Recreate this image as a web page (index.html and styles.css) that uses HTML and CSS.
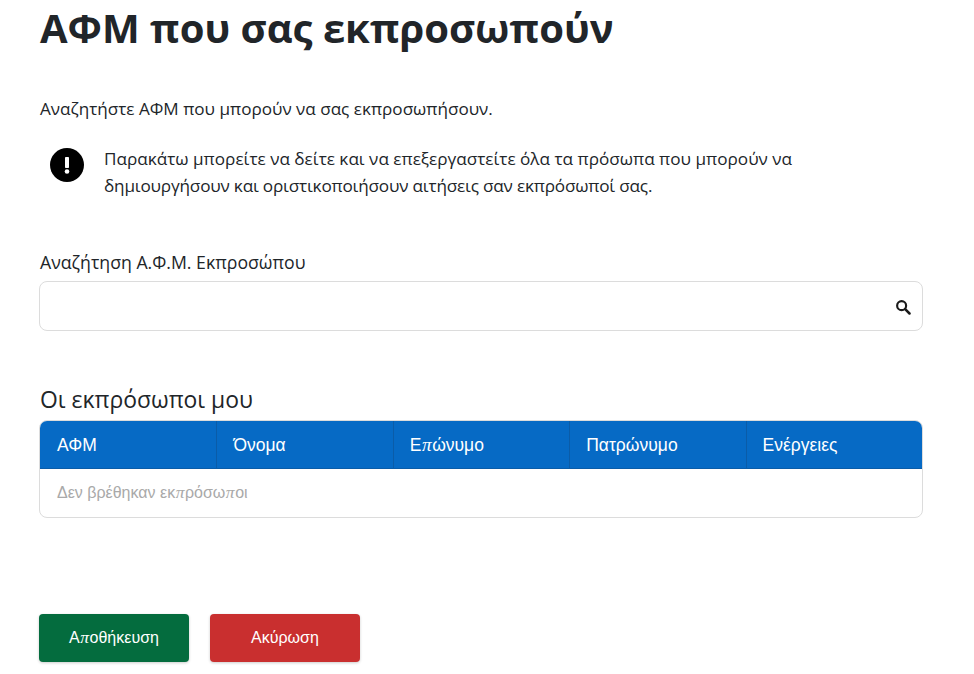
FILE: index.html
```html
<!DOCTYPE html>
<html lang="el">
<head>
<meta charset="utf-8">
<title>ΑΦΜ που σας εκπροσωπούν</title>
<link rel="stylesheet" href="styles.css">
</head>
<body>
<main class="page">
  <h1 class="title">ΑΦΜ που σας εκπροσωπούν</h1>
  <p class="lead">Αναζητήστε ΑΦΜ που μπορούν να σας εκπροσωπήσουν.</p>
  <div class="notice">
    <svg class="notice-icon" viewBox="0 0 34 34" aria-hidden="true">
      <circle cx="17" cy="17" r="17" fill="#000"/>
      <rect x="15" y="9" width="4" height="11" rx="0.8" fill="#fff"/>
      <circle cx="17" cy="23.5" r="2.3" fill="#fff"/>
    </svg>
    <p class="notice-text"><span class="line">Παρακάτω μπορείτε να δείτε και να επεξεργαστείτε όλα τα πρόσωπα που μπορούν να</span> <span class="line line-tight">δημιουργήσουν και οριστικοποιήσουν αιτήσεις σαν εκπρόσωποί σας.</span></p>
  </div>
  <label class="field-label" for="search">Αναζήτηση Α.Φ.Μ. Εκπροσώπου</label>
  <div class="search">
    <input class="search-input" id="search" type="text">
    <svg class="search-icon" viewBox="0 0 16 16" aria-hidden="true">
      <circle cx="6" cy="6" r="4.8" fill="none" stroke="#1a1a1a" stroke-width="2.3"/>
      <path d="M9.8 9.8 L14.4 14.4" stroke="#1a1a1a" stroke-width="2.7" stroke-linecap="round"/>
    </svg>
  </div>
  <h2 class="section-title">Οι εκπρόσωποι μου</h2>
  <div class="table">
    <div class="thead">
      <div class="th">ΑΦΜ</div>
      <div class="th">Όνομα</div>
      <div class="th"><span>Ε<span class="pi">π</span>ώνυμο</span></div>
      <div class="th">Πατρώνυμο</div>
      <div class="th">Ενέργειες</div>
    </div>
    <div class="empty"><span>Δεν βρέθηκαν εκ<span class="pi">π</span>ρόσω<span class="pi">π</span>οι</span></div>
  </div>
  <div class="actions">
    <button class="btn btn-save" type="button">Α<span class="pi">π</span>οθήκευση</button>
    <button class="btn btn-cancel" type="button">Ακύρωση</button>
  </div>
</main>
</body>
</html>
```
FILE: styles.css
```css
* { box-sizing: border-box; }
html, body { margin: 0; background: #fff; }
body { font-family: "Open Sans", "Noto Sans", sans-serif; color: #212529; overflow: hidden; }
.page { width: 974px; height: 674px; padding: 0 51px 0 39px; }
.title { margin: 0 0 0 1px; padding-top: 4px; font-size: 40px; line-height: 48px; font-weight: 700; color: #212529; }
.lead { margin: 45px 0 0 1px; font-size: 17.1px; line-height: 24px; }
.notice { display: flex; align-items: flex-start; gap: 20px; margin-top: 17px; padding-left: 11px; }
.notice-icon { width: 34px; height: 34px; flex: none; margin-top: 10px; }
.notice-text { margin: 0; padding-top: 7px; font-size: 17.15px; line-height: 27px; }
.line { display: block; white-space: nowrap; }
.line-tight { letter-spacing: -0.19px; }
.field-label { display: block; margin: 51px 0 0 1px; font-size: 17.7px; line-height: 24px; }
.search { position: relative; margin-top: 7px; }
.search-input { display: block; width: 100%; height: 50px; border: 1px solid #dcdcdc; border-radius: 8px; background: #fff; padding: 0 40px 0 12px; outline: none; }
.search-icon { position: absolute; right: 12px; top: 19px; width: 15px; height: 15px; }
.section-title { margin: 51px 0 0 1px; font-size: 22.9px; line-height: 36px; font-weight: 400; }
.table { margin-top: 2px; border: 1px solid #dcdcdc; border-radius: 8px; overflow: hidden; font-family: "Liberation Sans", Arial, sans-serif; }
.thead { display: grid; grid-template-columns: repeat(5, 1fr); height: 48px; background: #066ac5; color: #fff; border-bottom: 1px solid #0a5ca8; }
.th { display: flex; align-items: center; padding: 0 16px; font-size: 17.5px; line-height: 24px; border-left: 1px solid #0a5ca8; }
.th:first-child { border-left: 0; padding-left: 17px; }
.empty { height: 48px; padding: 0 17px; display: flex; align-items: center; font-size: 16px; line-height: 24px; color: #a9a9a9; }
.pi { font-family: "Liberation Serif", serif; font-style: italic; font-size: 1.1em; line-height: 0; padding: 0 0.5px; }
.actions { display: flex; gap: 21px; margin-top: 96px; }
.btn { height: 48px; border: 0; border-radius: 4px; color: #fff; font-family: "Liberation Sans", Arial, sans-serif; font-size: 16px; line-height: 24px; box-shadow: 0 1px 3px rgba(0,0,0,.2); }
.btn-save { width: 150px; background: #046c3e; }
.btn-cancel { width: 150px; background: #c92f2f; }
```
